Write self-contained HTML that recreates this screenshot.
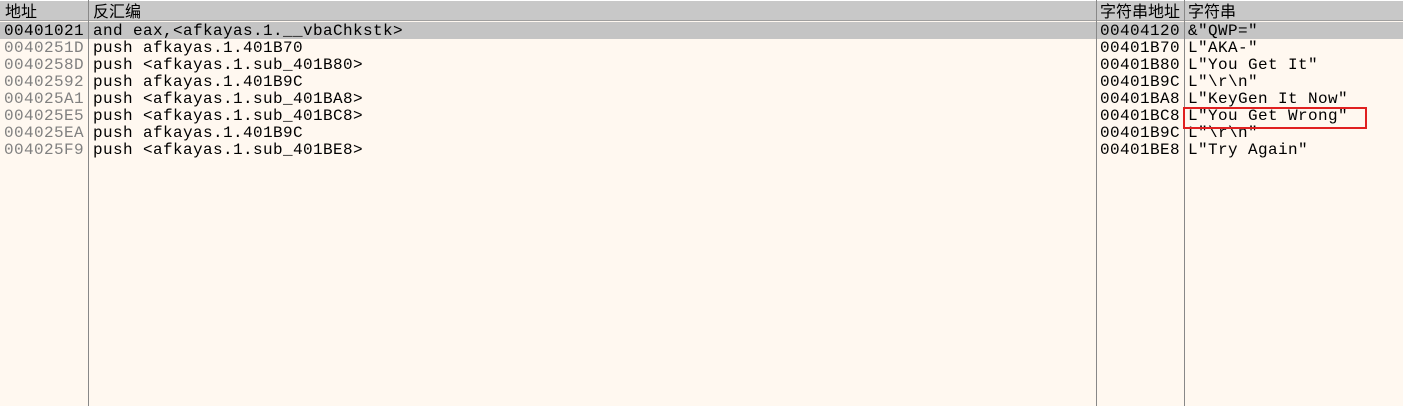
<!DOCTYPE html>
<html><head><meta charset="utf-8"><style>
body{margin:0;width:1403px;height:406px;background:#fff8f0;position:relative;overflow:hidden;font-family:"Liberation Mono","Noto Sans CJK SC",monospace;font-size:16px;letter-spacing:0.4px;color:#000}
.hdr{position:absolute;left:0;top:0;width:1403px;height:21px;background:#c8c8c8;border-top:1px solid #fff;box-sizing:border-box;border-bottom:1px solid #a0a0a0}
.sel{position:absolute;left:0;top:22px;width:1403px;height:17px;background:#c4c4c4}
.v{position:absolute;top:0;height:406px;width:1px;background:#888}
.t{position:absolute;white-space:pre;line-height:17px}
.h{position:absolute;top:2px;font-family:"Noto Sans CJK SC",sans-serif;font-size:16px;line-height:17px;letter-spacing:0}
.g{color:#808080}
</style></head><body>
<div class="hdr"></div><div class="sel"></div>
<div class="v" style="left:88px"></div><div class="v" style="left:1096px"></div><div class="v" style="left:1184px"></div>
<div class="h" style="left:5px">地址</div><div class="h" style="left:93px">反汇编</div><div class="h" style="left:1100px">字符串地址</div><div class="h" style="left:1188px">字符串</div>
<div class="t" style="left:4px;top:23px">00401021
<span class="g">0040251D
0040258D
00402592
004025A1
004025E5
004025EA
004025F9</span></div>
<div class="t" style="left:93px;top:23px">and eax,&lt;afkayas.1.__vbaChkstk&gt;
push afkayas.1.401B70
push &lt;afkayas.1.sub_401B80&gt;
push afkayas.1.401B9C
push &lt;afkayas.1.sub_401BA8&gt;
push &lt;afkayas.1.sub_401BC8&gt;
push afkayas.1.401B9C
push &lt;afkayas.1.sub_401BE8&gt;</div>
<div class="t" style="left:1100px;top:23px">00404120
00401B70
00401B80
00401B9C
00401BA8
00401BC8
00401B9C
00401BE8</div>
<div class="t" style="left:1188px;top:23px">&amp;"QWP="
L"AKA-"
L"You Get It"
L"\r\n"
L"KeyGen It Now"
L"You Get Wrong"
L"\r\n"
L"Try Again"</div>
<div style="position:absolute;left:1183px;top:107px;width:180px;height:18px;border:2px solid #e02020"></div>
</body></html>
